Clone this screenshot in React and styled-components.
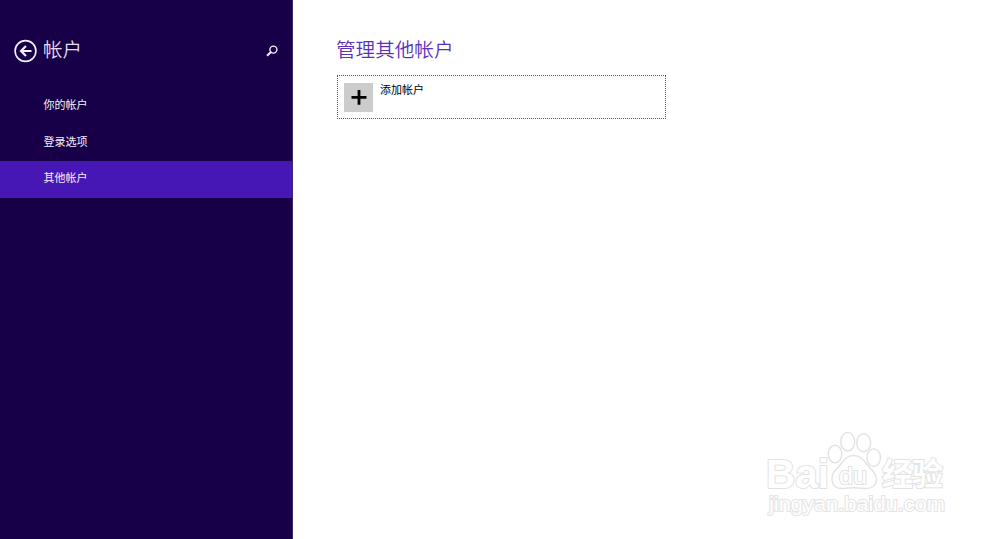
import React, {useState} from 'react'
import styled, {createGlobalStyle} from 'styled-components'

const menu = ['你的帐户', '登录选项', '其他帐户']

function App() {
    const [active,setActive] = useState(2);
    return (
        <Container>
            <GlobalStyle/>
            <Sidebar>
                <SidebarHeader>
                    <IconButton aria-label="返回">
                        <BackIcon/>
                    </IconButton>
                    <SidebarTitle>帐户</SidebarTitle>
                    <IconButton aria-label="搜索">
                        <SearchIcon/>
                    </IconButton>
                </SidebarHeader>
                <Menu>
                    {menu.map((name,i) => (
                        <MenuItem key={name} $active={i === active} onClick={()=>setActive(i)}>{name}</MenuItem>
                    ))}
                </Menu>
            </Sidebar>
            <Content>
                <Title>管理其他帐户</Title>
                <AddAccount>
                    <PlusBox>
                        <PlusIcon/>
                    </PlusBox>
                    <span>添加帐户</span>
                </AddAccount>
            </Content>
            <Watermark/>
        </Container>
    )
}

function BackIcon() {
    return (
        <svg width="24" height="24" viewBox="0 0 24 24" fill="none" stroke="#f4f0fa">
            <circle cx="11.5" cy="12" r="10.4" strokeWidth="1.6"/>
            <path d="M7 12H17.5M12 7L7 12L12 17" strokeWidth="2.2"/>
        </svg>
    )
}

function SearchIcon() {
    return (
        <svg width="12" height="12" viewBox="0 0 12 12" fill="none" stroke="#f4f0fa">
            <circle cx="7.4" cy="4.6" r="3.5" strokeWidth="1.4"/>
            <path d="M5 7L1 10.8" strokeWidth="2"/>
        </svg>
    )
}

function PlusIcon() {
    return (
        <svg width="16" height="16" viewBox="0 0 16 16" stroke="#000" strokeWidth="2.8">
            <path d="M0.5 7.3H15.5M8 0V14.8"/>
        </svg>
    )
}

function Watermark() {
    return (
        <WatermarkSvg width="200" height="110" viewBox="0 0 200 110">
            <Brand x="11" y="67.5" fontSize="40" textLength="63" lengthAdjust="spacingAndGlyphs">Bai</Brand>
            <ellipse cx="80" cy="34" rx="6.8" ry="8.8"/>
            <ellipse cx="92.7" cy="21.7" rx="7" ry="9.3"/>
            <ellipse cx="108.7" cy="22.7" rx="7" ry="9"/>
            <ellipse cx="118.7" cy="37.7" rx="6.8" ry="8.8"/>
            <path d="M98.7 35.5C90 35.5 87.5 43 83 47.5C79 51.5 76.5 54 77 60C77.5 66 82 69 88 68.5C95 67.5 102 67.5 109 68.5C116 69 121 66 121.5 60C122 54 118 51.5 114.5 47.5C110 43 107.5 35.5 98.7 35.5Z"/>
            <Brand x="84" y="63.5" fontSize="24" textLength="28" lengthAdjust="spacingAndGlyphs" $weight={400}>du</Brand>
            <Brand x="127" y="64.5" fontSize="31" textLength="61">经验</Brand>
            <Address x="14" y="91" fontSize="20" textLength="176" lengthAdjust="spacingAndGlyphs">jingyan.baidu.com</Address>
        </WatermarkSvg>
    )
}

export default App

const GlobalStyle = createGlobalStyle`
    *{
        box-sizing:border-box;
    }
    body{
        margin:0;
        background-color:#fff;
        font-family:"Noto Sans CJK SC", sans-serif;
    }
`
const Container = styled.div`
    display:flex;
    height:100vh;
    overflow:hidden;
`
const Sidebar = styled.div`
    width:293px;
    flex-shrink:0;
    background-color:#180048;
    border-right:1px solid #3c2868;
    color:#f4f0fa;
`
const SidebarHeader = styled.div`
    display:flex;
    align-items:center;
    height:24px;
    margin-top:39px;
    padding:0 14px;
`
const IconButton = styled.button`
    display:flex;
    padding:0;
    border:0;
    background:none;
    cursor:pointer;
`
const SidebarTitle = styled.h2`
    flex:1;
    margin:-4px 0 0 5px;
    font-size:19.5px;
    font-weight:350;
    line-height:24px;
    color:#e4def0;
`
const Menu = styled.div`
    margin-top:25px;
`
const MenuItem = styled.div`
    height:36.5px;
    padding-left:43.5px;
    font-size:11px;
    line-height:32px;
    cursor:pointer;
    background-color:${props => props.$active ? '#4617b4' : 'transparent'};
`
const Content = styled.div`
    flex:1;
    padding:35px 0 0 44px;
`
const Title = styled.h1`
    margin:0 0 0 -1px;
    color:#5a30bd;
    font-size:19.6px;
    font-weight:350;
    line-height:28px;
`
const AddAccount = styled.div`
    display:flex;
    width:329px;
    height:44px;
    margin-top:12px;
    padding:7px 6px;
    border:1px dotted #555;
    color:#000;
    font-size:11px;
    line-height:12px;
    span{
        margin-left:7px;
    }
`
const PlusBox = styled.div`
    display:flex;
    align-items:center;
    justify-content:center;
    width:29px;
    height:29px;
    background-color:#ccc;
`
const WatermarkSvg = styled.svg`
    position:absolute;
    right:45px;
    bottom:9px;
    pointer-events:none;
    fill:#fff;
    stroke:#e2e2e2;
    stroke-width:1.4;
`
const Brand = styled.text`
    font-family:"Liberation Sans", "Noto Sans CJK SC", sans-serif;
    font-weight:${props => props.$weight || 700};
    stroke-width:2;
    paint-order:stroke;
`
const Address = styled.text`
    font-family:"Liberation Sans", sans-serif;
    font-weight:400;
    stroke:#e4e4e4;
    stroke-width:2;
    paint-order:stroke;
`
